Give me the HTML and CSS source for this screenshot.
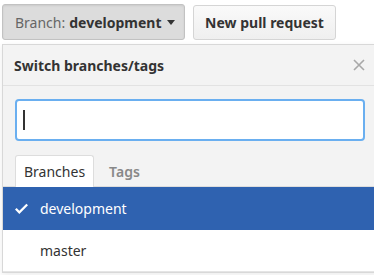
FILE: index.html
```html
<!DOCTYPE html>
<html>
<head>
<meta charset="utf-8">
<link rel="stylesheet" href="styles.css">
</head>
<body>
<div class="toolbar">
  <button class="btn btn-branch"><span class="muted">Branch:</span> <b>development</b> <span class="caret"></span></button>
  <button class="btn btn-new">New pull request</button>
</div>
<div class="panel">
  <div class="panel-header">
    <span class="title">Switch branches/tags</span>
    <svg class="close" width="12" height="12" viewBox="0 0 12 12"><path d="M1 1L11 11M11 1L1 11" stroke="#a8a8a8" stroke-width="1.6" fill="none"/></svg>
  </div>
  <div class="filter">
    <div class="input"><span class="cursor"></span></div>
  </div>
  <div class="tabs">
    <span class="tab active">Branches</span>
    <span class="tab">Tags</span>
  </div>
  <div class="list">
    <div class="item selected">
      <svg class="check" width="13" height="11" viewBox="0 0 12 10"><path d="M12 2l-8 8-4-4 1.5-1.5L4 7l6.5-6.5z" fill="#fff"/></svg>
      <span>development</span>
    </div>
    <div class="item">
      <span>master</span>
    </div>
  </div>
</div>
</body>
</html>
```

FILE: styles.css
```css
html, body {
  margin: 0;
  padding: 0;
  background: #fff;
  overflow: hidden;
}
body {
  width: 374px;
  height: 275px;
  font-family: "Noto Sans", "Open Sans", sans-serif;
  font-size: 14px;
  color: #333;
}
.toolbar {
  display: flex;
  align-items: flex-start;
  gap: 8px;
  padding: 4px 0 0 2px;
}
.btn {
  font-family: inherit;
  font-size: 14px;
  height: 36px;
  border-radius: 3px;
  padding: 0 12px;
  display: flex;
  align-items: center;
  gap: 4px;
  color: #333;
  white-space: nowrap;
}
.btn-branch {
  width: 183px;
  background: #dcdcdc;
  border: 1px solid #c2c2c2;
  box-shadow: inset 0 1px 2px rgba(0,0,0,0.08);
}
.btn-branch .muted {
  color: #666;
}
.btn-new {
  margin-top: 1px;
  height: 35px;
  width: 143px;
  padding: 0;
  font-weight: bold;
  background: linear-gradient(#fafafa, #efefef);
  border: 1px solid #d5d5d5;
  justify-content: center;
}
.caret {
  width: 0;
  height: 0;
  border-left: 4px solid transparent;
  border-right: 4px solid transparent;
  border-top: 5px solid #333;
  margin-left: 2px;
}
.panel {
  margin: 4px 0 0 2px;
  width: 374px;
  border: 1px solid #d8d8d8;
  background: #f3f3f3;
  box-shadow: 0 2px 6px rgba(0,0,0,0.08);
}
.panel-header {
  height: 40px;
  display: flex;
  align-items: center;
  justify-content: space-between;
  padding: 0 12px 0 11px;
  border-bottom: 1px solid #e2e2e2;
}
.title {
  font-weight: bold;
  color: #333;
}
.close {
  display: block;
}
.filter {
  padding: 13px 12px 14px;
}
.input {
  height: 38px;
  background: #fff;
  border: 2px solid #6aaff0;
  border-radius: 4px;
  display: flex;
  align-items: center;
  padding-left: 6px;
}
.cursor {
  width: 2px;
  height: 20px;
  background: #333;
}
.tabs {
  display: flex;
  padding: 0 12px;
  border-bottom: 1px solid #ddd;
  height: 31px;
  align-items: flex-end;
}
.tab {
  height: 31px;
  box-sizing: border-box;
  padding: 0 8px 0 15px;
  display: flex;
  align-items: center;
  color: #888;
  font-weight: 600;
  margin-bottom: -1px;
}
.tab.active {
  background: #fff;
  color: #333;
  font-weight: normal;
  border: 1px solid #ddd;
  border-bottom: none;
  border-radius: 3px 3px 0 0;
  height: 32px;
  padding: 0 8px;
}
.list {
  background: #fff;
}
.item {
  height: 41px;
  display: flex;
  align-items: center;
  padding-left: 37px;
  border-bottom: 1px solid #e5e5e5;
  color: #333;
  position: relative;
}
.item.selected {
  background: #2f62b0;
  color: #fff;
  border-bottom: none;
  height: 43px;
}
.check {
  position: absolute;
  left: 12px;
  top: 16px;
}
```
